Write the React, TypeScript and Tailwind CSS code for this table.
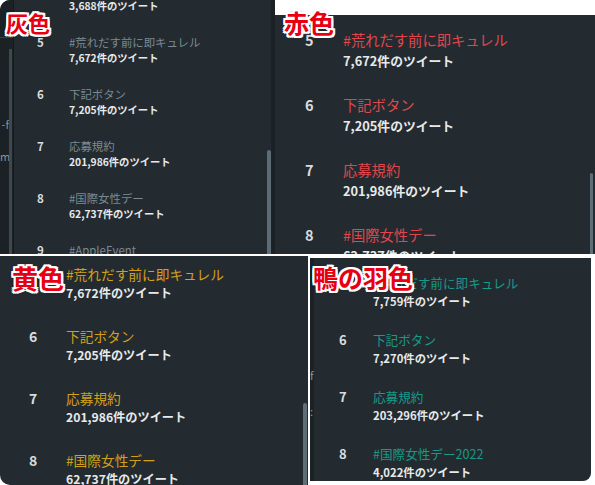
type Trend = { rank: number; title: string; count: string };

const BASE: Trend[] = [
  { rank: 5, title: "#荒れだす前に即キュレル", count: "7,672件のツイート" },
  { rank: 6, title: "下記ボタン", count: "7,205件のツイート" },
  { rank: 7, title: "応募規約", count: "201,986件のツイート" },
  { rank: 8, title: "#国際女性デー", count: "62,737件のツイート" },
];

const GRAY_ROWS: Trend[] = [
  { rank: 4, title: "", count: "3,688件のツイート" },
  ...BASE,
  { rank: 9, title: "#AppleEvent", count: "" },
];

const DUCK_ROWS: Trend[] = [
  { rank: 5, title: "#荒れだす前に即キュレル", count: "7,759件のツイート" },
  { rank: 6, title: "下記ボタン", count: "7,270件のツイート" },
  { rank: 7, title: "応募規約", count: "203,296件のツイート" },
  { rank: 8, title: "#国際女性デー2022", count: "4,022件のツイート" },
];

type Look = {
  row: string;
  rank: string;
  title: string;
  count: string;
};

const GRAY: Look = {
  row: "h-[52px]",
  rank: "w-[32px] text-[11.5px] leading-[16px]",
  title: "text-[11.4px] leading-[16px] text-[#7b8a92]",
  count: "text-[10.3px] leading-[16px]",
};

const RED: Look = {
  row: "h-[65px]",
  rank: "w-[38px] text-[14.5px] leading-[22px]",
  title: "text-[14.3px] leading-[22px] text-[#e0474c]",
  count: "text-[12.8px] leading-[20px]",
};

const YELLOW: Look = {
  row: "h-[62px]",
  rank: "w-[37px] text-[14px] leading-[20px]",
  title: "text-[13.7px] leading-[20px] text-[#d4a017]",
  count: "text-[12.2px] leading-[19px]",
};

const DUCK: Look = {
  row: "h-[57px]",
  rank: "w-[34px] text-[13px] leading-[19px]",
  title: "text-[12.6px] leading-[19px] text-[#179a88]",
  count: "text-[11.3px] leading-[18px]",
};

function TrendList({ rows, look, className }: { rows: Trend[]; look: Look; className: string }) {
  return (
    <div className={`min-w-0 flex-1 overflow-hidden ${className}`}>
      {rows.map((t) => (
        <div key={t.rank} className={`flex ${look.row}`}>
          <div className={`shrink-0 font-bold text-[#d9dcde] ${look.rank}`}>{t.title ? t.rank : "\u00a0"}</div>
          <div className="flex flex-col whitespace-nowrap">
            <div className={look.title}>{t.title || "\u00a0"}</div>
            <div className={`font-bold text-[#e7e9ea] ${look.count}`}>{t.count || "\u00a0"}</div>
          </div>
        </div>
      ))}
    </div>
  );
}

function Label({ text, className }: { text: string; className: string }) {
  return (
    <span
      className={`absolute z-10 whitespace-nowrap font-bold leading-none text-[#e60012] [text-shadow:2px_0_0_#fff,-2px_0_0_#fff,0_2px_0_#fff,0_-2px_0_#fff,2px_2px_0_#fff,-2px_-2px_0_#fff,2px_-2px_0_#fff,-2px_2px_0_#fff,0_0_4px_rgba(0,0,0,0.45)] ${className}`}
    >
      {text}
    </span>
  );
}

export default function App() {
  return (
    <div className="flex h-[485px] w-[595px] flex-col overflow-hidden rounded-[10px] bg-white font-['Noto_Sans_CJK_JP',sans-serif]">
      {/* top row */}
      <div className="flex h-[254px] shrink-0">
        {/* 灰色 */}
        <div className="relative flex w-[271px] overflow-hidden bg-[#232b30]">
          <div className="flex w-[13px] flex-col bg-[#1b2125]">
            <div className="h-[38px] shrink-0 border-b border-[#3a444b]" />
            <div className="flex min-h-0 flex-1">
              <div className="flex-1 overflow-hidden text-right text-[11px] leading-[14px] text-[#8a969c]">
                <div className="mt-[79px]">-f</div>
                <div className="mt-[18px]">m:</div>
              </div>
              <div className="mt-[11px] w-[3px] bg-[#3e484f]" />
              <div className="w-[1px]" />
            </div>
          </div>
          <div className="w-[1px] bg-[#151a1e]" />
          <TrendList rows={GRAY_ROWS} look={GRAY} className="-mt-[18px] pl-[23px]" />
          <div className="flex w-[4px] flex-col">
            <div className="mt-[150px] flex-1 rounded-t-full bg-[#5d6c74]" />
          </div>
          <Label text="灰色" className="left-[6px] top-[11px] text-[22px]" />
        </div>
        <div className="w-[4px] bg-[#1b2125]" />
        {/* 赤色 */}
        <div className="relative flex flex-1 flex-col overflow-hidden">
          <div className="h-[15px] shrink-0 bg-white" />
          <div className="flex min-h-0 flex-1 bg-[#232b30]">
            <TrendList rows={BASE} look={RED} className="pl-[30px] pt-[14px]" />
            <div className="flex w-[3px] flex-col">
              <div className="mt-[158px] flex-1 rounded-t-full bg-[#5f6e76]" />
            </div>
            <div className="w-[2px]" />
          </div>
          <Label text="赤色" className="left-[9px] top-[10px] text-[25px]" />
        </div>
      </div>

      <div className="h-[2px] shrink-0 bg-white" />

      {/* bottom row */}
      <div className="flex min-h-0 flex-1">
        {/* 黄色 */}
        <div className="relative flex w-[308px] overflow-hidden bg-[#232b30]">
          <TrendList rows={BASE} look={YELLOW} className="pl-[29px] pt-[8px]" />
          <div className="flex w-[4px] flex-col">
            <div className="mt-[147px] flex-1 rounded-t-full bg-[#5f6e76]" />
          </div>
          <div className="w-[1px]" />
          <Label text="黄色" className="left-[12px] top-[9px] text-[26px]" />
        </div>
        <div className="w-[2px] bg-white" />
        {/* 鴨の羽色 */}
        <div className="relative flex flex-1 bg-white pb-[4px] pr-[4px] pt-[2px]">
          <div className="flex flex-1 overflow-hidden rounded-br-[8px] bg-[#232b30]">
            <div className="flex w-[4px] flex-col bg-[#1b2125] text-[11px] leading-[14px] text-[#8a969c]">
              <div className="mt-[110px]">f</div>
              <div className="mt-[22px]">:</div>
            </div>
            <TrendList rows={DUCK_ROWS} look={DUCK} className="pl-[25px] pt-[15px]" />
          </div>
          <Label text="鴨の羽色" className="left-[3px] top-[9px] text-[25px]" />
        </div>
      </div>
    </div>
  );
}
